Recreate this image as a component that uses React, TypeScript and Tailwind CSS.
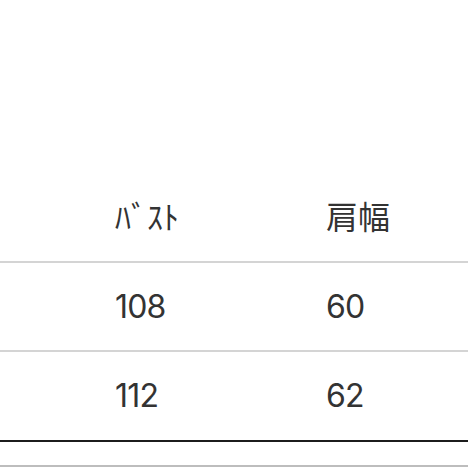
const ROWS: Array<{ bust: string; shoulder: string; last?: boolean }> = [
  { bust: "108", shoulder: "60" },
  { bust: "112", shoulder: "62", last: true },
];

export default function App() {
  return (
    <div
      className="w-[468px] h-[468px] overflow-hidden bg-white text-[#333333]"
      style={{ fontFamily: "Inter, 'Noto Sans CJK JP', sans-serif" }}
    >
      <div className="pt-[174px]">
        <div className="grid grid-cols-[115px_211px_1fr] items-center h-[89px] border-b-2 border-[#d4d4d4]">
          <div />
          <div className="text-[32px] leading-none">ﾊﾞｽﾄ</div>
          <div className="text-[32px] leading-none">肩幅</div>
        </div>
        {ROWS.map((r) => (
          <div
            key={r.bust}
            className={
              r.last
                ? "grid grid-cols-[115px_211px_1fr] items-center h-[90px] border-b-2 border-[#1c1c1c]"
                : "grid grid-cols-[115px_211px_1fr] items-center h-[89px] border-b-2 border-[#d4d4d4]"
            }
          >
            <div />
            <div className="text-[32px] leading-none tracking-tight">{r.bust}</div>
            <div className="text-[32px] leading-none tracking-tight">{r.shoulder}</div>
          </div>
        ))}
        <div className="h-[25px] border-b-2 border-[#bdbdbd]" />
      </div>
    </div>
  );
}
